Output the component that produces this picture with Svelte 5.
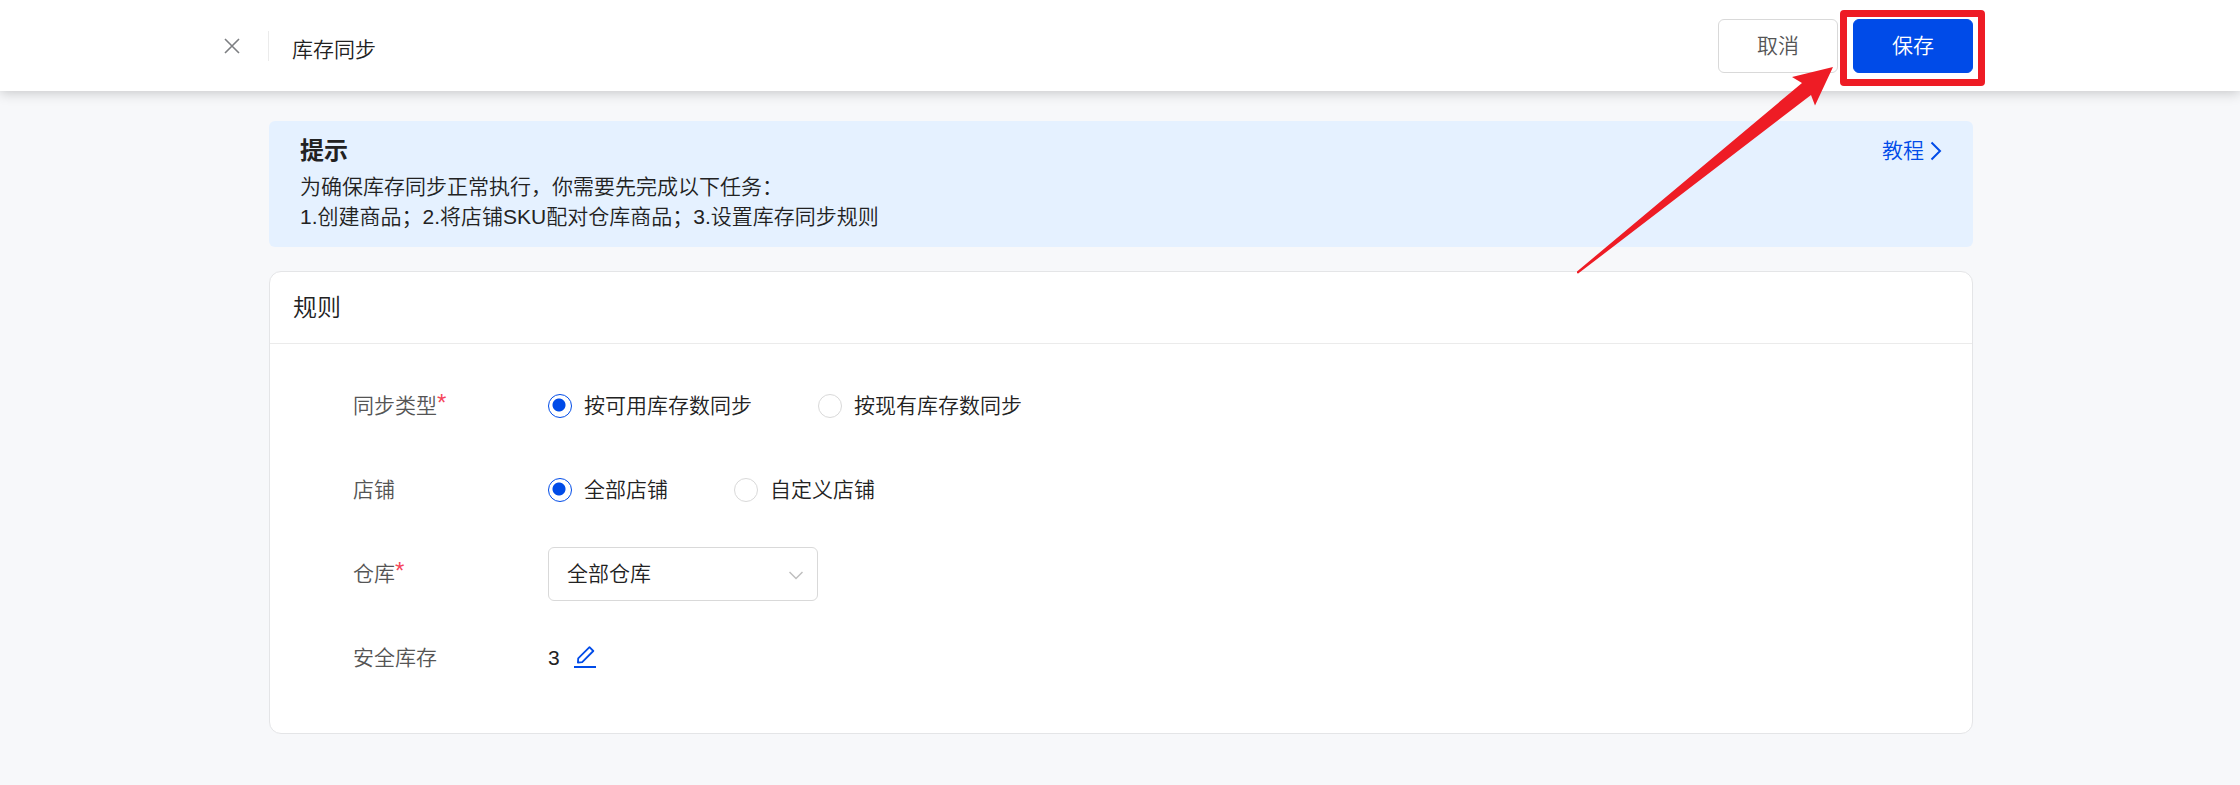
<script lang="ts">
	type Option = { value: string; text: string };

	const syncTypes: Option[] = [
		{ value: 'available', text: '按可用库存数同步' },
		{ value: 'onhand', text: '按现有库存数同步' }
	];
	const shopScopes: Option[] = [
		{ value: 'all', text: '全部店铺' },
		{ value: 'custom', text: '自定义店铺' }
	];

	let syncType = $state('available');
	let shopScope = $state('all');
	let warehouse = $state('all');
	let safetyStock = $state(3);
</script>

<header class="topbar">
	<button class="close" type="button" aria-label="关闭">
		<svg width="16" height="16" viewBox="0 0 16 16" fill="none" stroke="#7d7f82" stroke-width="1.6">
			<path d="M1 1l14 14M15 1L1 15" />
		</svg>
	</button>
	<h1>库存同步</h1>
	<div class="actions">
		<button class="btn" type="button">取消</button>
		<div class="highlight">
			<button class="btn primary" type="button">保存</button>
			<svg class="pointer" width="257" height="208" viewBox="0 0 257 208" fill="#ee1c25" aria-hidden="true">
				<path d="M256 0L215 10l10 6L0 204.500a1.200 1.200 0 0 0 1.500 1.800L234 28l4 10.500z" />
			</svg>
		</div>
	</div>
</header>

<main>
	<section class="notice">
		<div>
			<h2>提示</h2>
			<p>为确保库存同步正常执行，你需要先完成以下任务：</p>
			<p>1.创建商品；2.将店铺SKU配对仓库商品；3.设置库存同步规则</p>
		</div>
		<a class="guide" href="#guide">
			教程
			<svg width="12" height="20" viewBox="0 0 12 20" fill="none" stroke="currentColor" stroke-width="2">
				<path d="M1.500 1.500L10 10l-8.500 8.500" />
			</svg>
		</a>
	</section>

	<section class="card">
		<h2>规则</h2>
		<form>
			<div class="row" role="radiogroup" aria-labelledby="sync-label">
				<span class="label" id="sync-label">同步类型<sup>*</sup></span>
				<div class="options">
					{#each syncTypes as option}
						<label>
							<input type="radio" name="sync" value={option.value} bind:group={syncType} />
							{option.text}
						</label>
					{/each}
				</div>
			</div>
			<div class="row" role="radiogroup" aria-labelledby="shop-label">
				<span class="label" id="shop-label">店铺</span>
				<div class="options">
					{#each shopScopes as option}
						<label>
							<input type="radio" name="shop" value={option.value} bind:group={shopScope} />
							{option.text}
						</label>
					{/each}
				</div>
			</div>
			<div class="row">
				<label class="label" for="warehouse">仓库<sup>*</sup></label>
				<div class="select">
					<select id="warehouse" bind:value={warehouse}>
						<option value="all">全部仓库</option>
					</select>
					<svg width="14" height="9" viewBox="0 0 14 9" fill="none" stroke="#bfbfbf" stroke-width="1.500">
						<path d="M.5 1L7 7.500 13.500 1" />
					</svg>
				</div>
			</div>
			<div class="row">
				<span class="label">安全库存</span>
				<span>{safetyStock}</span>
				<button class="edit" type="button" aria-label="编辑安全库存">
					<svg width="22" height="24" viewBox="0 0 22 24" fill="none" stroke="currentColor" stroke-width="1.800">
						<path d="M15.500 1.200L19.300 5 8.200 16.200l-4.300.5.300-4.300z" stroke-linejoin="round" />
						<path d="M0 21h22" stroke-width="2" />
					</svg>
				</button>
			</div>
		</form>
	</section>
</main>

<style>
	:global(body) {
		background: #f7f8fa;
		color: #222;
		font: 21px/30px 'Liberation Sans', 'Noto Sans CJK SC', sans-serif;
		font-weight: 350;
	}

	h1,
	h2,
	p {
		margin: 0;
		font-weight: inherit;
	}

	button,
	select {
		font: inherit;
		color: inherit;
		cursor: pointer;
	}

	svg {
		display: block;
	}

	.topbar {
		position: relative;
		display: flex;
		align-items: center;
		height: 91px;
		padding: 0 267px 0 224px;
		box-sizing: border-box;
		background: #fff;
		box-shadow: 0 2px 12px rgba(0, 0, 0, 0.2);
	}

	.close {
		display: flex;
		align-items: center;
		height: 30px;
		padding: 0 28px 0 0;
		border: 0;
		border-right: 1px solid #ebebeb;
		background: none;
	}

	h1 {
		margin-left: 23px;
		padding-top: 8px;
		font-size: 21px;
	}

	.actions {
		display: flex;
		gap: 15px;
		margin-left: auto;
	}

	.btn {
		display: block;
		width: 120px;
		height: 54px;
		padding: 0;
		border: 1px solid #d9d9d9;
		border-radius: 6px;
		background: #fff;
		color: #555;
	}

	.primary {
		border-color: #004be8;
		background: #004be8;
		color: #fff;
	}

	.highlight {
		position: relative;
	}

	.highlight::after {
		content: '';
		position: absolute;
		inset: -9px -12px -13px -13px;
		border: 7px solid #ee1c25;
		border-radius: 4px;
		pointer-events: none;
	}

	.pointer {
		position: absolute;
		top: 48px;
		right: 139px;
		pointer-events: none;
	}

	main {
		padding: 30px 267px 51px 269px;
	}

	.notice {
		display: flex;
		justify-content: space-between;
		align-items: flex-start;
		padding: 12px 31px 15px;
		border-radius: 6px;
		background: #e5f1ff;
	}

	.notice h2 {
		margin-bottom: 3px;
		font-size: 24px;
		line-height: 36px;
		font-weight: 700;
	}

	.guide {
		display: flex;
		align-items: center;
		gap: 6px;
		padding-top: 3px;
		color: #004be8;
		text-decoration: none;
	}

	.card {
		margin-top: 24px;
		border: 1px solid #e4e5e7;
		border-radius: 12px;
		background: #fff;
	}

	.card h2 {
		padding: 18px 23px;
		border-bottom: 1px solid #ebebeb;
		font-size: 24px;
		line-height: 35px;
	}

	form {
		display: grid;
		gap: 30px;
		padding: 35px 83px 48px;
	}

	.row {
		display: flex;
		align-items: center;
		height: 54px;
	}

	.label {
		width: 195px;
		color: #555;
	}

	sup {
		color: #f5465b;
		font-size: 24px;
		line-height: 0;
		vertical-align: 2px;
	}

	.options {
		display: flex;
		gap: 66px;
	}

	.options label {
		display: flex;
		align-items: center;
		gap: 12px;
		cursor: pointer;
	}

	input[type='radio'] {
		appearance: none;
		width: 24px;
		height: 24px;
		margin: 0;
		border: 1px solid #d9d9d9;
		border-radius: 50%;
		background: #fff;
	}

	input[type='radio']:checked {
		border-color: #004be8;
		background: radial-gradient(circle at 10px 10px, #004be8 6px, #fff 7px);
	}

	.select {
		position: relative;
		width: 270px;
	}

	select {
		appearance: none;
		display: block;
		width: 100%;
		height: 54px;
		padding: 0 40px 0 18px;
		border: 1px solid #d9d9d9;
		border-radius: 6px;
		background: #fff;
	}

	.select svg {
		position: absolute;
		top: 24px;
		right: 15px;
		pointer-events: none;
	}

	.edit {
		margin-left: 14px;
		padding: 0;
		border: 0;
		background: none;
		color: #004be8;
	}
</style>
